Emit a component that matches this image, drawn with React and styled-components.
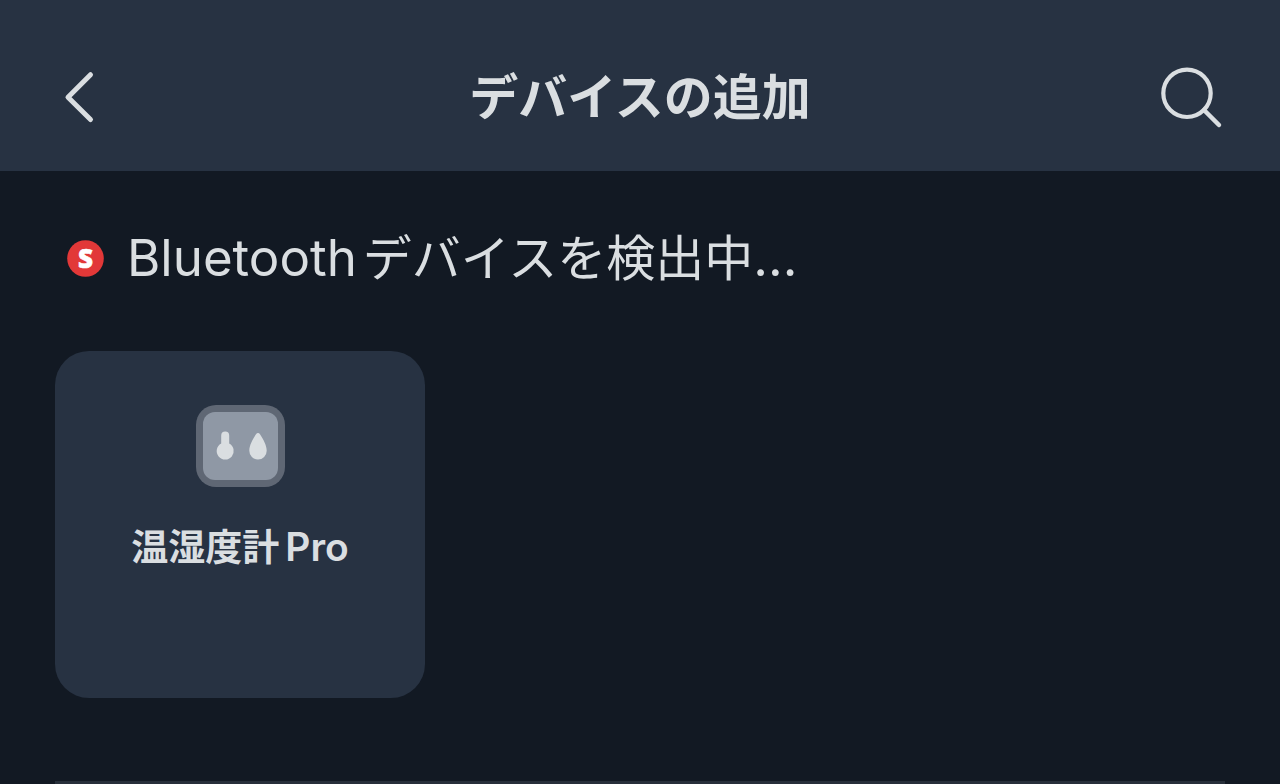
import React from "react";
import styled, { createGlobalStyle } from "styled-components";

const GlobalStyle = createGlobalStyle`
  * {
    box-sizing: border-box;
  }

  body {
    margin: 0;
    background: #121923;
    color: #dadee1;
    font-family: Inter, "Noto Sans CJK JP", sans-serif;
  }
`;

const Header = styled.header`
  display: grid;
  grid-template-columns: 72px 1fr 72px;
  align-items: center;
  padding: 62px 52px 38px;
  background: #273242;
`;

const IconButton = styled.button`
  display: flex;
  justify-content: ${({ $end }) => ($end ? "flex-end" : "flex-start")};
  padding: 0;
  border: 0;
  background: none;
  color: inherit;
  cursor: pointer;
`;

const Title = styled.h1`
  margin: 0;
  font-size: 49px;
  font-weight: 700;
  line-height: 71px;
  text-align: center;
`;

const Content = styled.main`
  padding: 55px 55px 0;
`;

const Status = styled.div`
  display: flex;
  align-items: center;
  gap: 23px;
  padding-left: 12px;
`;

const StatusText = styled.p`
  display: flex;
  align-items: baseline;
  margin: 0;
  font-size: 49px;
  font-weight: 400;
  line-height: 64px;
`;

const Latin = styled.span`
  margin-right: ${({ $gap }) => ($gap ? "6px" : "0")};
  font-size: 51px;
`;

const Devices = styled.div`
  display: grid;
  grid-template-columns: repeat(3, 1fr);
  gap: 30px;
  margin-top: 60px;
`;

const DeviceCard = styled.button`
  display: flex;
  flex-direction: column;
  align-items: center;
  gap: 32px;
  min-height: 347px;
  padding: 54px 20px;
  border: 0;
  border-radius: 34px;
  background: #273242;
  color: inherit;
  font-family: inherit;
  cursor: pointer;
`;

const DeviceName = styled.span`
  display: flex;
  align-items: baseline;
  gap: 6px;
  font-size: 37px;
  font-weight: 600;
  line-height: 56px;
`;

const ModelName = styled.span`
  font-size: 39px;
`;

const Divider = styled.hr`
  height: 3px;
  margin: 83px 0 0;
  border: 0;
  background: #272f3a;
`;

const BackIcon = () => (
  <svg width="56" height="56" viewBox="0 0 56 56" fill="none" aria-hidden="true">
    <path
      d="M38.500 4.700 L16 27.200 L38.500 49.500"
      stroke="currentColor"
      strokeWidth="5"
      strokeLinecap="round"
      strokeLinejoin="round"
    />
  </svg>
);

const SearchIcon = () => (
  <svg width="68" height="64" viewBox="0 0 68 64" fill="none" aria-hidden="true">
    <circle cx="27" cy="27.300" r="23.700" stroke="currentColor" strokeWidth="4.200" />
    <path
      d="M44 44 L59 59"
      stroke="currentColor"
      strokeWidth="4.500"
      strokeLinecap="round"
    />
  </svg>
);

const BrandBadge = () => (
  <svg width="37" height="37" viewBox="0 0 37 37" aria-hidden="true">
    <circle cx="18.500" cy="18.500" r="18.300" fill="#e23838" />
    <text
      x="18.500"
      y="27.500"
      textAnchor="middle"
      fill="#ffffff"
      stroke="#ffffff"
      strokeWidth="0.600"
      fontFamily="'Open Sans', sans-serif"
      fontSize="26"
      fontWeight="800"
    >
      S
    </text>
  </svg>
);

const MeterIcon = () => (
  <svg width="90" height="82" viewBox="0 0 90 82" aria-hidden="true">
    <rect x="1" width="89" height="82" rx="20" fill="#5f6774" />
    <rect x="8" y="7" width="75" height="68" rx="12" fill="#8f98a5" />
    {/* thermometer */}
    <path
      d="M26.200 30.500 a4 4 0 0 1 8 0 V38.500 a8.500 8.500 0 1 1 -8 0 Z"
      fill="#dadee1"
    />
    {/* drop */}
    <path
      d="M61 29.300 C62 27.700 64 27.700 65 29.300 C68.300 34.500 71.700 40.500 71.700 45.800 A8.700 8.700 0 0 1 54.300 45.800 C54.300 40.500 57.700 34.500 61 29.300 Z"
      fill="#dadee1"
    />
  </svg>
);

const App = () => {
  return (
    <>
      <GlobalStyle />
      <Header>
        <IconButton type="button" aria-label="戻る">
          <BackIcon />
        </IconButton>
        <Title>デバイスの追加</Title>
        <IconButton type="button" aria-label="検索" $end>
          <SearchIcon />
        </IconButton>
      </Header>

      <Content>
        <Status role="status">
          <BrandBadge />
          <StatusText>
            <Latin $gap>Bluetooth</Latin>
            <span>デバイスを検出中</span>
            <Latin>...</Latin>
          </StatusText>
        </Status>

        <Devices>
          <DeviceCard type="button">
            <MeterIcon />
            <DeviceName>
              <span>温湿度計</span>
              <ModelName>Pro</ModelName>
            </DeviceName>
          </DeviceCard>
        </Devices>

        <Divider />
      </Content>
    </>
  );
};

export default App;
